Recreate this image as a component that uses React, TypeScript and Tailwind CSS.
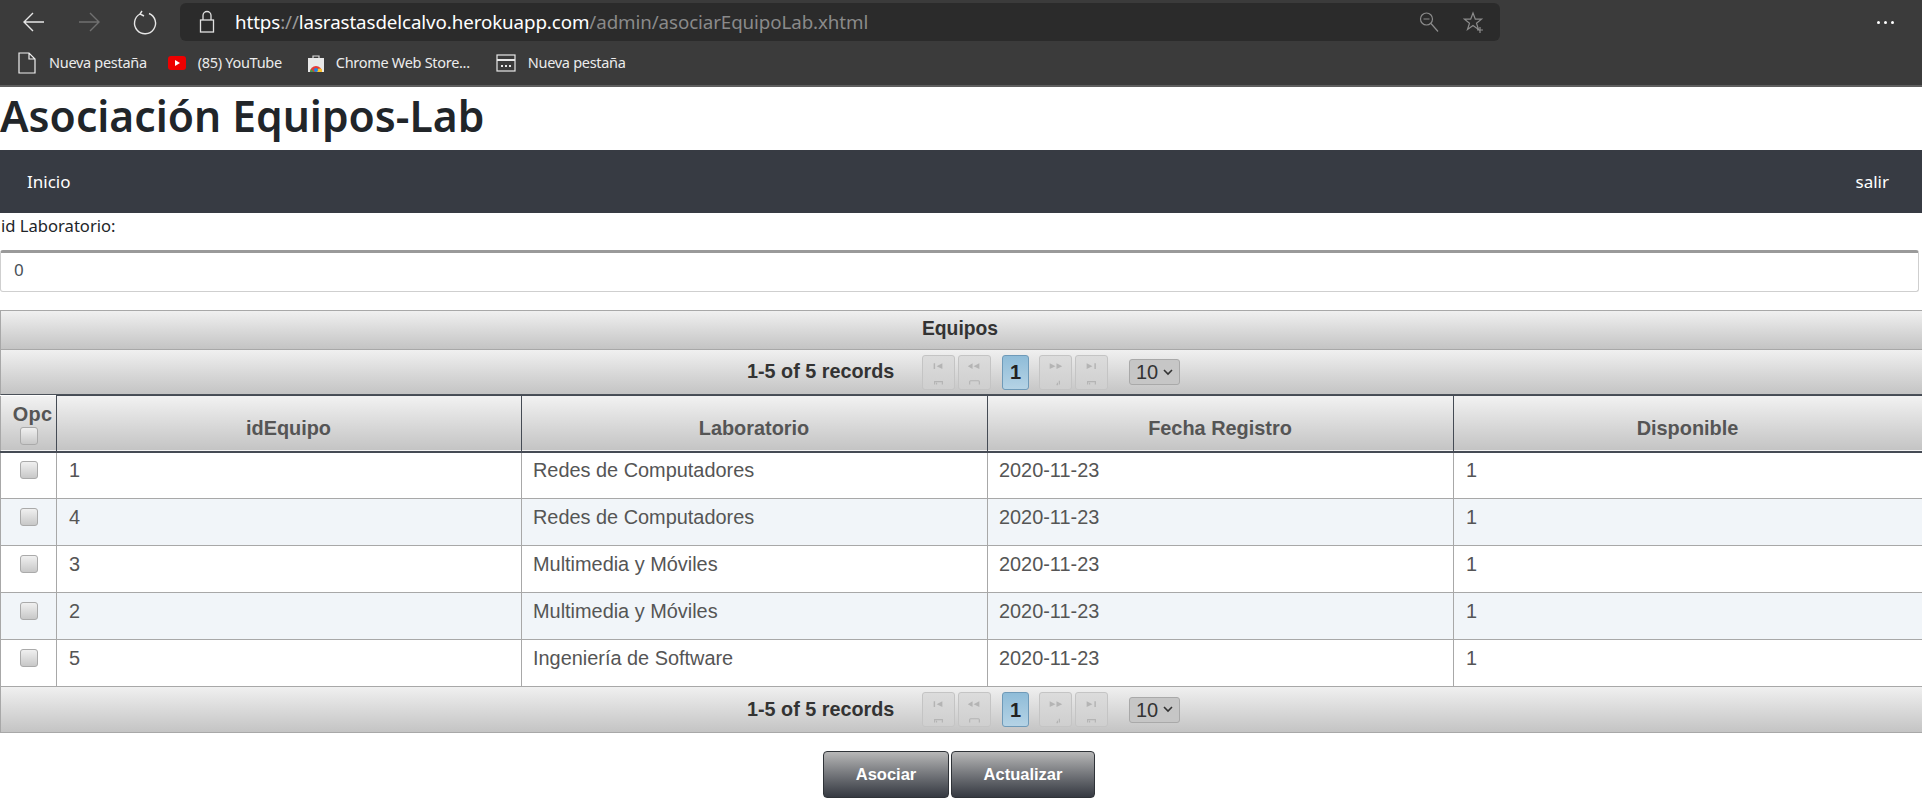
const rows = [
  { id: "1", lab: "Redes de Computadores" },
  { id: "4", lab: "Redes de Computadores" },
  { id: "3", lab: "Multimedia y Móviles" },
  { id: "2", lab: "Multimedia y Móviles" },
  { id: "5", lab: "Ingeniería de Software" },
];

const headers = ["idEquipo", "Laboratorio", "Fecha Registro", "Disponible"];

function Bookmark({ icon, label, className = "" }: { icon: React.ReactNode; label: string; className?: string }) {
  return (
    <div className={`flex items-center gap-[12px] font-['Noto_Sans'] text-[14.5px] tracking-[-0.3px] text-[#ececec] ${className}`}>
      {icon}
      <span>{label}</span>
    </div>
  );
}

function PageIcon({ d, tail }: { d: string; tail: string }) {
  return (
    <svg width="32" height="34" viewBox="0 0 32 34" fill="none">
      <path d={d} fill="#b4b4b4" />
      <path d={tail} stroke="#b4b4b4" strokeWidth="1.2" />
    </svg>
  );
}

function PageButton({ d, tail }: { d: string; tail: string }) {
  return (
    <span className="flex h-[35px] w-[33px] items-center justify-center rounded-[3px] border border-[#c4c4c4] bg-linear-to-b from-[#dcdcdc] to-[#cfcfcf]">
      <PageIcon d={d} tail={tail} />
    </span>
  );
}

function Paginator({ className }: { className: string }) {
  return (
    <div className={`flex items-center bg-linear-to-b from-[#f0f0f0] to-[#c4c4c4] ${className}`}>
      <span className="ml-[746px] w-[147px] text-[19.8px] font-bold whitespace-nowrap text-[#333]">1-5 of 5 records</span>
      <div className="ml-[28px] flex gap-[3px]">
        <PageButton d="M11 8h1.5v6H11zM14 11l6-3v6z" tail="M12 30v-3h8v3M14 30v-2" />
        <PageButton d="M9 11l5-3v6zM15 11l6-3v6z" tail="M11 30v-3q0-1 1-1h8q1 0 1 1v3" />
      </div>
      <span className="ml-[11px] flex h-[35px] w-[27px] items-center justify-center rounded-[3px] border border-[#6f9ab8] bg-linear-to-b from-[#8fbcd8] to-[#b5d3e5] text-[20px] font-bold text-[#222]">
        1
      </span>
      <div className="ml-[10px] flex gap-[3px]">
        <PageButton d="M10 8l6 3-6 3zM17 8l6 3-6 3z" tail="M17 30h1v-2M20 30v-4" />
        <PageButton d="M11 8l6 3-6 3zM19 8h1.5v6H19z" tail="M12 30v-3h8v3M14 30v-2" />
      </div>
      <span className="ml-[21px] flex h-[26px] w-[51px] items-center justify-center gap-[5px] rounded-[3px] border border-[#a9a9a9] bg-[#c6c6c6] text-[20px] text-[#333]">
        10
        <svg width="10" height="7" viewBox="0 0 10 7" fill="none">
          <path d="M1 1l4 4 4-4" stroke="#333" strokeWidth="1.6" />
        </svg>
      </span>
    </div>
  );
}

function Checkbox() {
  return (
    <span className="mx-auto block h-[18px] w-[18px] rounded-[3px] border border-[#aaa] bg-linear-to-b from-[#f0f0f0] to-[#c8c8c8]" />
  );
}

function ActionButton({ label, width }: { label: string; width: string }) {
  return (
    <button className={`h-[47px] rounded-[4px] border border-[#2f3338] bg-linear-to-b from-[#b8b8b8] to-[#363a42] text-[16.5px] font-bold text-white ${width}`}>
      {label}
    </button>
  );
}

export default function App() {
  return (
    <div className="h-[808px] w-[1922px] overflow-hidden bg-white font-['Liberation_Sans',sans-serif]">
      {/* BROWSER BAR */}
      <div className="h-[87px] border-b-2 border-[#5e5e5e] bg-[#3b3b3b]">
        <div className="flex h-[44px] items-center">
          <div className="flex w-[180px] items-center pl-[21px]">
            <svg width="26" height="26" viewBox="0 0 26 26" fill="none" stroke="#e6e6e6" strokeWidth="1.4">
              <path d="M3 13h20M12 4l-9 9 9 9" />
            </svg>
            <svg className="ml-[29px]" width="26" height="26" viewBox="0 0 26 26" fill="none" stroke="#707070" strokeWidth="1.4">
              <path d="M3 13h20M14 4l9 9-9 9" />
            </svg>
            <svg className="ml-[30px]" width="26" height="26" viewBox="0 0 26 26" fill="none" stroke="#e6e6e6" strokeWidth="1.4">
              <path d="M8 5a10.5 10.5 0 1 0 9-.5M10 2l-2 3 4 2" />
            </svg>
          </div>
          <div className="flex h-[38px] w-[1320px] items-center rounded-[6px] bg-[#2b2b2b] pl-[17px]">
            <svg width="20" height="26" viewBox="0 0 20 26" fill="none" stroke="#e0e0e0" strokeWidth="1.3">
              <rect x="3.5" y="11" width="13" height="12" />
              <path d="M6 11V6.5a4 4 0 0 1 8 0V11" />
            </svg>
            <span className="ml-[18px] font-['Noto_Sans'] text-[18.75px] tracking-[-0.1px] whitespace-nowrap text-white">
              https<span className="text-[#9a9a9a]">://</span>lasrastasdelcalvo.herokuapp.com
              <span className="text-[#8a8a8a]">/admin/asociarEquipoLab.xhtml</span>
            </span>
            <div className="ml-auto flex items-center gap-[23px] pr-[15px]">
              <svg width="22" height="24" viewBox="0 0 22 24" fill="none" stroke="#8c8c8c" strokeWidth="1.2">
                <circle cx="8.5" cy="9" r="6" />
                <path d="M5.5 9h6M13 13.5l7 8" />
              </svg>
              <svg width="22" height="24" viewBox="0 0 22 24" fill="none" stroke="#8c8c8c" strokeWidth="1.2">
                <path d="M10 3l2.3 6.2h6.2l-5 4 2 6.3-5.5-4-5.5 4 2-6.3-5-4h6.2zM17 17v6M14 20h6" />
              </svg>
            </div>
          </div>
          <div className="ml-auto mr-[28px] flex gap-[4px]">
            <span className="size-[3px] rounded-full bg-white" />
            <span className="size-[3px] rounded-full bg-white" />
            <span className="size-[3px] rounded-full bg-white" />
          </div>
        </div>
        <div className="flex h-[38px] items-center gap-[26px] pl-[17px]">
          <Bookmark
            className="-mr-[5px] gap-[9px]"
            label="Nueva pestaña"
            icon={
              <svg width="20" height="24" viewBox="0 0 20 24" fill="none" stroke="#f0f0f0" strokeWidth="1.2">
                <path d="M2 2h10l6 6v14H2zM12 2v6h6" />
              </svg>
            }
          />
          <Bookmark
            label="(85) YouTube"
            icon={
              <svg width="18" height="14" viewBox="0 0 18 14">
                <rect width="18" height="14" rx="3" fill="#ee0000" />
                <path d="M7 4l5 3-5 3z" fill="#fff" />
              </svg>
            }
          />
          <Bookmark
            label="Chrome Web Store..."
            icon={
              <svg width="16" height="18" viewBox="0 0 16 18">
                <path d="M5 4V2h6v2" fill="none" stroke="#ddd" strokeWidth="1.2" />
                <rect y="4" width="16" height="14" fill="#e8e8e8" />
                <path d="M2 18a6 6 0 0 1 12 0z" fill="#e53935" />
                <path d="M8 18a4 4 0 0 1 6-3v3z" fill="#fbc02d" />
                <path d="M2 18a6 6 0 0 1 1-3l3 3z" fill="#43a047" />
                <circle cx="8" cy="16" r="2" fill="#1e88e5" />
              </svg>
            }
          />
          <Bookmark
            label="Nueva pestaña"
            icon={
              <svg width="20" height="18" viewBox="0 0 20 18" fill="none" stroke="#e8e8e8" strokeWidth="1.2">
                <rect x="1" y="1" width="18" height="16" />
                <path d="M1 6h18M5 12h2M9 12h2M13 12h2" strokeWidth="2" />
              </svg>
            }
          />
        </div>
      </div>

      {/* TITLE */}
      <h1 className="flex h-[63px] items-center pb-[5px] font-['Noto_Sans'] text-[42.6px] font-semibold text-[#212529]">
        Asociación Equipos-Lab
      </h1>

      {/* NAV */}
      <div className="flex h-[63px] items-center justify-between bg-[#373b43] pr-[33px] pl-[27px] font-['Noto_Sans'] text-[17px] text-white">
        <span>Inicio</span>
        <span>salir</span>
      </div>

      {/* FORM */}
      <div className="flex h-[37px] items-center pb-[10px] pl-[1px] font-['Noto_Sans'] text-[16.6px] text-[#212529]">id Laboratorio:</div>
      <div className="flex h-[42px] w-[1919px] items-center rounded-[3px] border border-[#cfcfcf] border-t-[3px] border-t-[#9a9a9a] pb-[5px] pl-[13px] font-['Noto_Sans'] text-[17px] text-[#495057]">
        0
      </div>

      {/* DATA TABLE */}
      <div className="mt-[18px] w-[1922px]">
        <div className="flex h-[40px] items-center justify-center border-y border-l border-[#a8a8a8] bg-linear-to-b from-[#f0f0f0] to-[#c4c4c4] pr-[3px] pb-[2px] text-[19.3px] font-bold text-[#333]">
          Equipos
        </div>
        <Paginator className="h-[45px] border-b border-l border-b-[#4a5058] border-l-[#a8a8a8]" />
        <table className="w-full table-fixed border-collapse text-[19.9px]">
          <colgroup>
            <col className="w-[56px]" />
            <col className="w-[465px]" />
            <col className="w-[466px]" />
            <col className="w-[466px]" />
            <col />
          </colgroup>
          <thead>
            <tr className="h-[56px] border-b-2 border-[#454b54] bg-linear-to-b from-[#f2f2f2] to-[#c4c4c4] text-[#555]">
              <th className="border-r border-l border-r-[#454b54] border-l-[#a8a8a8] align-top font-bold">
                <div className="pt-[6px] pl-[8px] leading-[25px] tracking-[0.3px]">Opc</div>
                <Checkbox />
              </th>
              {headers.map((h, i) => (
                <th key={h} className={`border-y border-[#454b54] pt-[12px] pr-[1px] font-bold ${i === 3 ? "" : "border-r"}`}>
                  {h}
                </th>
              ))}
            </tr>
          </thead>
          <tbody className="text-[#555]">
            {rows.map((row, i) => (
              <tr key={row.id} className={`h-[47px] ${i % 2 === 1 ? "bg-[#f1f5f9]" : "bg-white"}`}>
                <td className="border border-[#a8a8a8] pb-[11px]">
                  <Checkbox />
                </td>
                <td className="border border-[#a8a8a8] pb-[9px] pl-[12px]">{row.id}</td>
                <td className="border border-[#a8a8a8] pb-[9px] pl-[11px]">{row.lab}</td>
                <td className="border border-[#a8a8a8] pb-[9px] pl-[11px]">2020-11-23</td>
                <td className="border border-r-0 border-[#a8a8a8] pb-[9px] pl-[12px]">1</td>
              </tr>
            ))}
          </tbody>
        </table>
        <Paginator className="h-[46px] border-b border-l border-[#a8a8a8]" />
      </div>

      {/* ACTIONS */}
      <div className="mt-[18px] flex justify-center gap-[2px] pr-[4px]">
        <ActionButton label="Asociar" width="w-[126px]" />
        <ActionButton label="Actualizar" width="w-[144px]" />
      </div>
    </div>
  );
}
